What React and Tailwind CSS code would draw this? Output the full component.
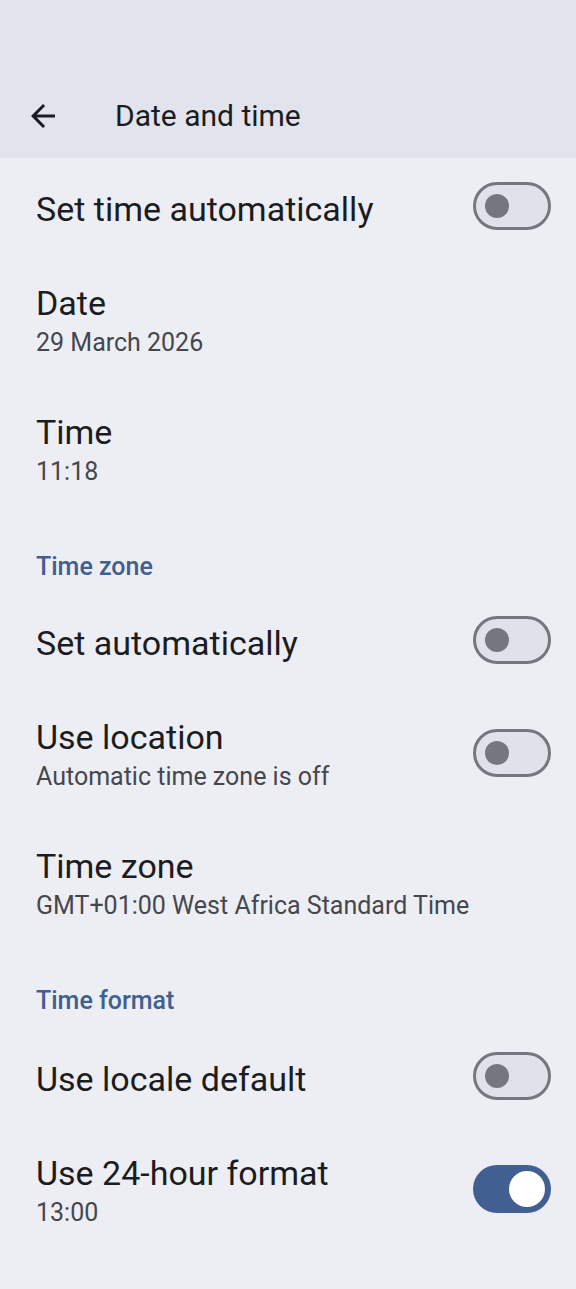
const rows = [
  { type: 'switch', title: 'Set time automatically', on: false },
  { type: 'item', title: 'Date', sub: '29 March 2026' },
  { type: 'item', title: 'Time', sub: '11:18' },
  { type: 'section', title: 'Time zone' },
  { type: 'switch', title: 'Set automatically', on: false },
  { type: 'switch', title: 'Use location', sub: 'Automatic time zone is off', on: false },
  { type: 'item', title: 'Time zone', sub: 'GMT+01:00 West Africa Standard Time' },
  { type: 'section', title: 'Time format', tall: true },
  { type: 'switch', title: 'Use locale default', on: false },
  { type: 'switch', title: 'Use 24-hour format', sub: '13:00', on: true },
]

function Toggle({ on }) {
  if (on) {
    return (
      <div className="w-[78px] h-[48px] rounded-full bg-[#415f91] flex items-center justify-end pr-[6px] flex-shrink-0">
        <div className="w-[36px] h-[36px] rounded-full bg-white" />
      </div>
    )
  }
  return (
    <div className="w-[78px] h-[48px] rounded-full bg-[#e1e2e9] border-[3px] border-[#74777f] flex items-center pl-[9px] flex-shrink-0">
      <div className="w-[24px] h-[24px] rounded-full bg-[#74777f]" />
    </div>
  )
}

function Row({ row }) {
  if (row.type === 'section') {
    return (
      <div className={`${row.tall ? 'h-[82px]' : 'h-[80px]'} pt-[39px] pl-[36px]`}>
        <p className="text-[25px] leading-[32px] font-medium text-[#415f91]">{row.title}</p>
      </div>
    )
  }
  const twoLine = !!row.sub
  return (
    <div className={`${twoLine ? 'h-[129px]' : 'h-[96px]'} flex items-center justify-between pl-[36px] pr-[25px]`}>
      <div className={twoLine ? 'pt-[4px]' : 'pt-[5px]'}>
        <p className="text-[34px] leading-[44px] text-[#1b1c21]">{row.title}</p>
        {row.sub && <p className="text-[25px] leading-[35px] text-[#45474e]">{row.sub}</p>}
      </div>
      {row.type === 'switch' && <Toggle on={row.on} />}
    </div>
  )
}

export default function App() {
  return (
    <div className="w-[576px] min-h-[1289px] bg-[#edeef4] font-['Roboto',sans-serif]">
      {/* Toolbar */}
      <div className="h-[158px] bg-[#e1e4ed] pt-[98px]">
        <div className="flex items-center h-[36px] pl-[25px]">
          <svg width="36" height="36" viewBox="0 0 24 24" className="flex-shrink-0" aria-hidden="true">
            <path d="M20 11H7.83l5.59-5.59L12 4l-8 8 8 8 1.41-1.41L7.83 13H20v-2z" fill="#1b1c21" />
          </svg>
          <h1 className="ml-[54px] text-[30px] leading-[36px] text-[#1b1c21]">Date and time</h1>
        </div>
      </div>

      {rows.map((r, i) => <Row key={i} row={r} />)}
    </div>
  )
}
